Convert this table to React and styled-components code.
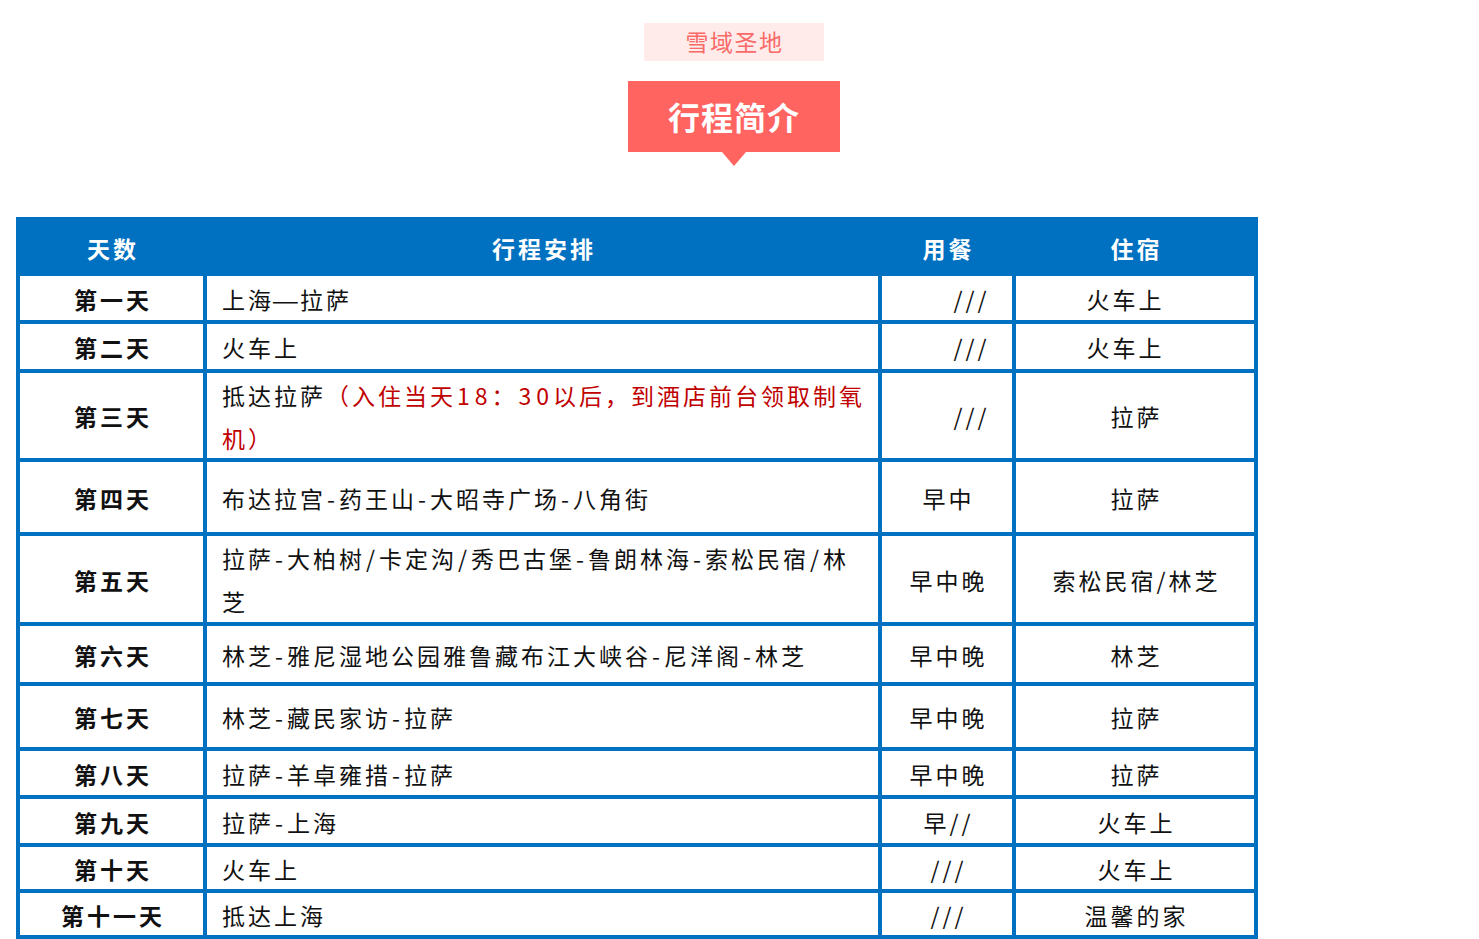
import React from "react";
import styled, { createGlobalStyle } from "styled-components";

const GlobalStyle = createGlobalStyle`
  body {
    margin: 0;
    background: #fff;
    font-family: "Noto Sans CJK SC", "Noto Sans", sans-serif;
  }
`;

const rows = [
  { day: "第一天", plan: ["上海—拉萨"], meal: "///", mealNudge: 46, stay: "火车上", stayNudge: -22, h: 44 },
  { day: "第二天", plan: ["火车上"], meal: "///", mealNudge: 46, stay: "火车上", stayNudge: -22, h: 45 },
  {
    day: "第三天",
    plan: ["抵达拉萨", { red: "（入住当天18：30以后，到酒店前台领取制氧机）" }],
    meal: "///",
    mealNudge: 46,
    stay: "拉萨",
    h: 85,
  },
  { day: "第四天", plan: ["布达拉宫-药王山-大昭寺广场-八角街"], meal: "早中", stay: "拉萨", h: 70 },
  {
    day: "第五天",
    plan: ["拉萨-大柏树/卡定沟/秀巴古堡-鲁朗林海-索松民宿/林芝"],
    meal: "早中晚",
    stay: "索松民宿/林芝",
    h: 86,
  },
  { day: "第六天", plan: ["林芝-雅尼湿地公园雅鲁藏布江大峡谷-尼洋阁-林芝"], meal: "早中晚", stay: "林芝", h: 56 },
  { day: "第七天", plan: ["林芝-藏民家访-拉萨"], meal: "早中晚", stay: "拉萨", h: 61 },
  { day: "第八天", plan: ["拉萨-羊卓雍措-拉萨"], meal: "早中晚", stay: "拉萨", h: 44 },
  { day: "第九天", plan: ["拉萨-上海"], meal: "早//", stay: "火车上", h: 44 },
  { day: "第十天", plan: ["火车上"], meal: "///", stay: "火车上", h: 42 },
  { day: "第十一天", plan: ["抵达上海"], meal: "///", stay: "温馨的家", h: 42 },
];

// the source font sets dashes, slashes and digits a little wider
const spaced = (text) =>
  text.split(/([-/—0-9])/).map((part, i) => {
    if (part === "—") return <Dash key={i}>{part}</Dash>;
    if (/^[-/0-9]$/.test(part)) return <Sep key={i}>{part}</Sep>;
    return part;
  });

const App = () => {
  return (
    <Page>
      <GlobalStyle />
      <TitleBlock>
        <Tag>雪域圣地</Tag>
        <Banner>行程简介</Banner>
      </TitleBlock>
      <Schedule rowHeights={rows.map((r) => r.h)}>
        <HeadCell>天数</HeadCell>
        <HeadCell>行程安排</HeadCell>
        <HeadCell>用餐</HeadCell>
        <HeadCell>住宿</HeadCell>
        {rows.map((r) => (
          <React.Fragment key={r.day}>
            <DayCell>{r.day}</DayCell>
            <PlanCell>
              <span>
                {r.plan.map((p, i) =>
                  typeof p === "string" ? (
                    <React.Fragment key={i}>{spaced(p)}</React.Fragment>
                  ) : (
                    <Red key={i}>{spaced(p.red)}</Red>
                  )
                )}
              </span>
            </PlanCell>
            <CenterCell nudge={r.mealNudge || 0}>{r.meal}</CenterCell>
            <CenterCell nudge={r.stayNudge || 0}>{r.stay}</CenterCell>
          </React.Fragment>
        ))}
      </Schedule>
    </Page>
  );
};

const Page = styled.div`
  display: flex;
  flex-direction: column;
  padding: 23px 0 0 16px;
`;

const TitleBlock = styled.div`
  width: 1436px;
  display: flex;
  flex-direction: column;
  align-items: center;
`;

const Tag = styled.div`
  width: 180px;
  height: 38px;
  display: flex;
  align-items: center;
  justify-content: center;
  background: #ffebea;
  color: #f96a68;
  font-size: 23px;
  letter-spacing: 1.5px;
  padding: 0 0 3px 1px;
  box-sizing: border-box;
`;

const Banner = styled.div`
  position: relative;
  margin-top: 20px;
  width: 212px;
  height: 71px;
  display: flex;
  align-items: center;
  justify-content: center;
  background: #ff6461;
  color: #fff;
  font-size: 32px;
  font-weight: 700;
  letter-spacing: 1px;
  padding: 0 0 2px 0;
  box-sizing: border-box;

  &::after {
    content: "";
    position: absolute;
    left: 50%;
    bottom: -14px;
    margin-left: -12.5px;
    border-left: 12.5px solid transparent;
    border-right: 12.5px solid transparent;
    border-top: 14px solid #ff6461;
  }
`;

const Schedule = styled.div`
  margin-top: 65px;
  width: 1242px;
  box-sizing: border-box;
  display: grid;
  grid-template-columns: 183px 671px 130px 238px;
  grid-template-rows: 51px ${(p) => p.rowHeights.map((h) => `${h}px`).join(" ")};
  gap: 4px;
  padding: 4px;
  background: #0070c0;
`;

const HeadCell = styled.div`
  display: flex;
  align-items: center;
  justify-content: center;
  padding-top: 3px;
  color: #fff;
  font-size: 23px;
  font-weight: 700;
  letter-spacing: 3px;
  padding-left: 3px;
`;

const Cell = styled.div`
  background: #fff;
  display: flex;
  align-items: center;
  padding-top: 2px;
  box-sizing: border-box;
  color: #111;
  font-size: 23px;
  line-height: 43px;
  letter-spacing: 3px;
`;

const DayCell = styled(Cell)`
  justify-content: center;
  font-weight: 700;
  padding-left: 3px;
`;

const PlanCell = styled(Cell)`
  padding-left: 15px;
  padding-right: 12px;
`;

const CenterCell = styled(Cell)`
  justify-content: center;
  padding-left: ${(p) => (p.nudge > 0 ? p.nudge : 0) + 3}px;
  padding-right: ${(p) => (p.nudge < 0 ? -p.nudge : 0)}px;
`;

const Sep = styled.span`
  margin: 0 1px;
`;

const Dash = styled.span`
  display: inline-block;
  width: 23px;
  margin-right: 3px;
  letter-spacing: 0;
  text-align: center;
  transform: scaleX(1.35);
`;

const Red = styled.span`
  color: #c00000;
`;

export default App;
